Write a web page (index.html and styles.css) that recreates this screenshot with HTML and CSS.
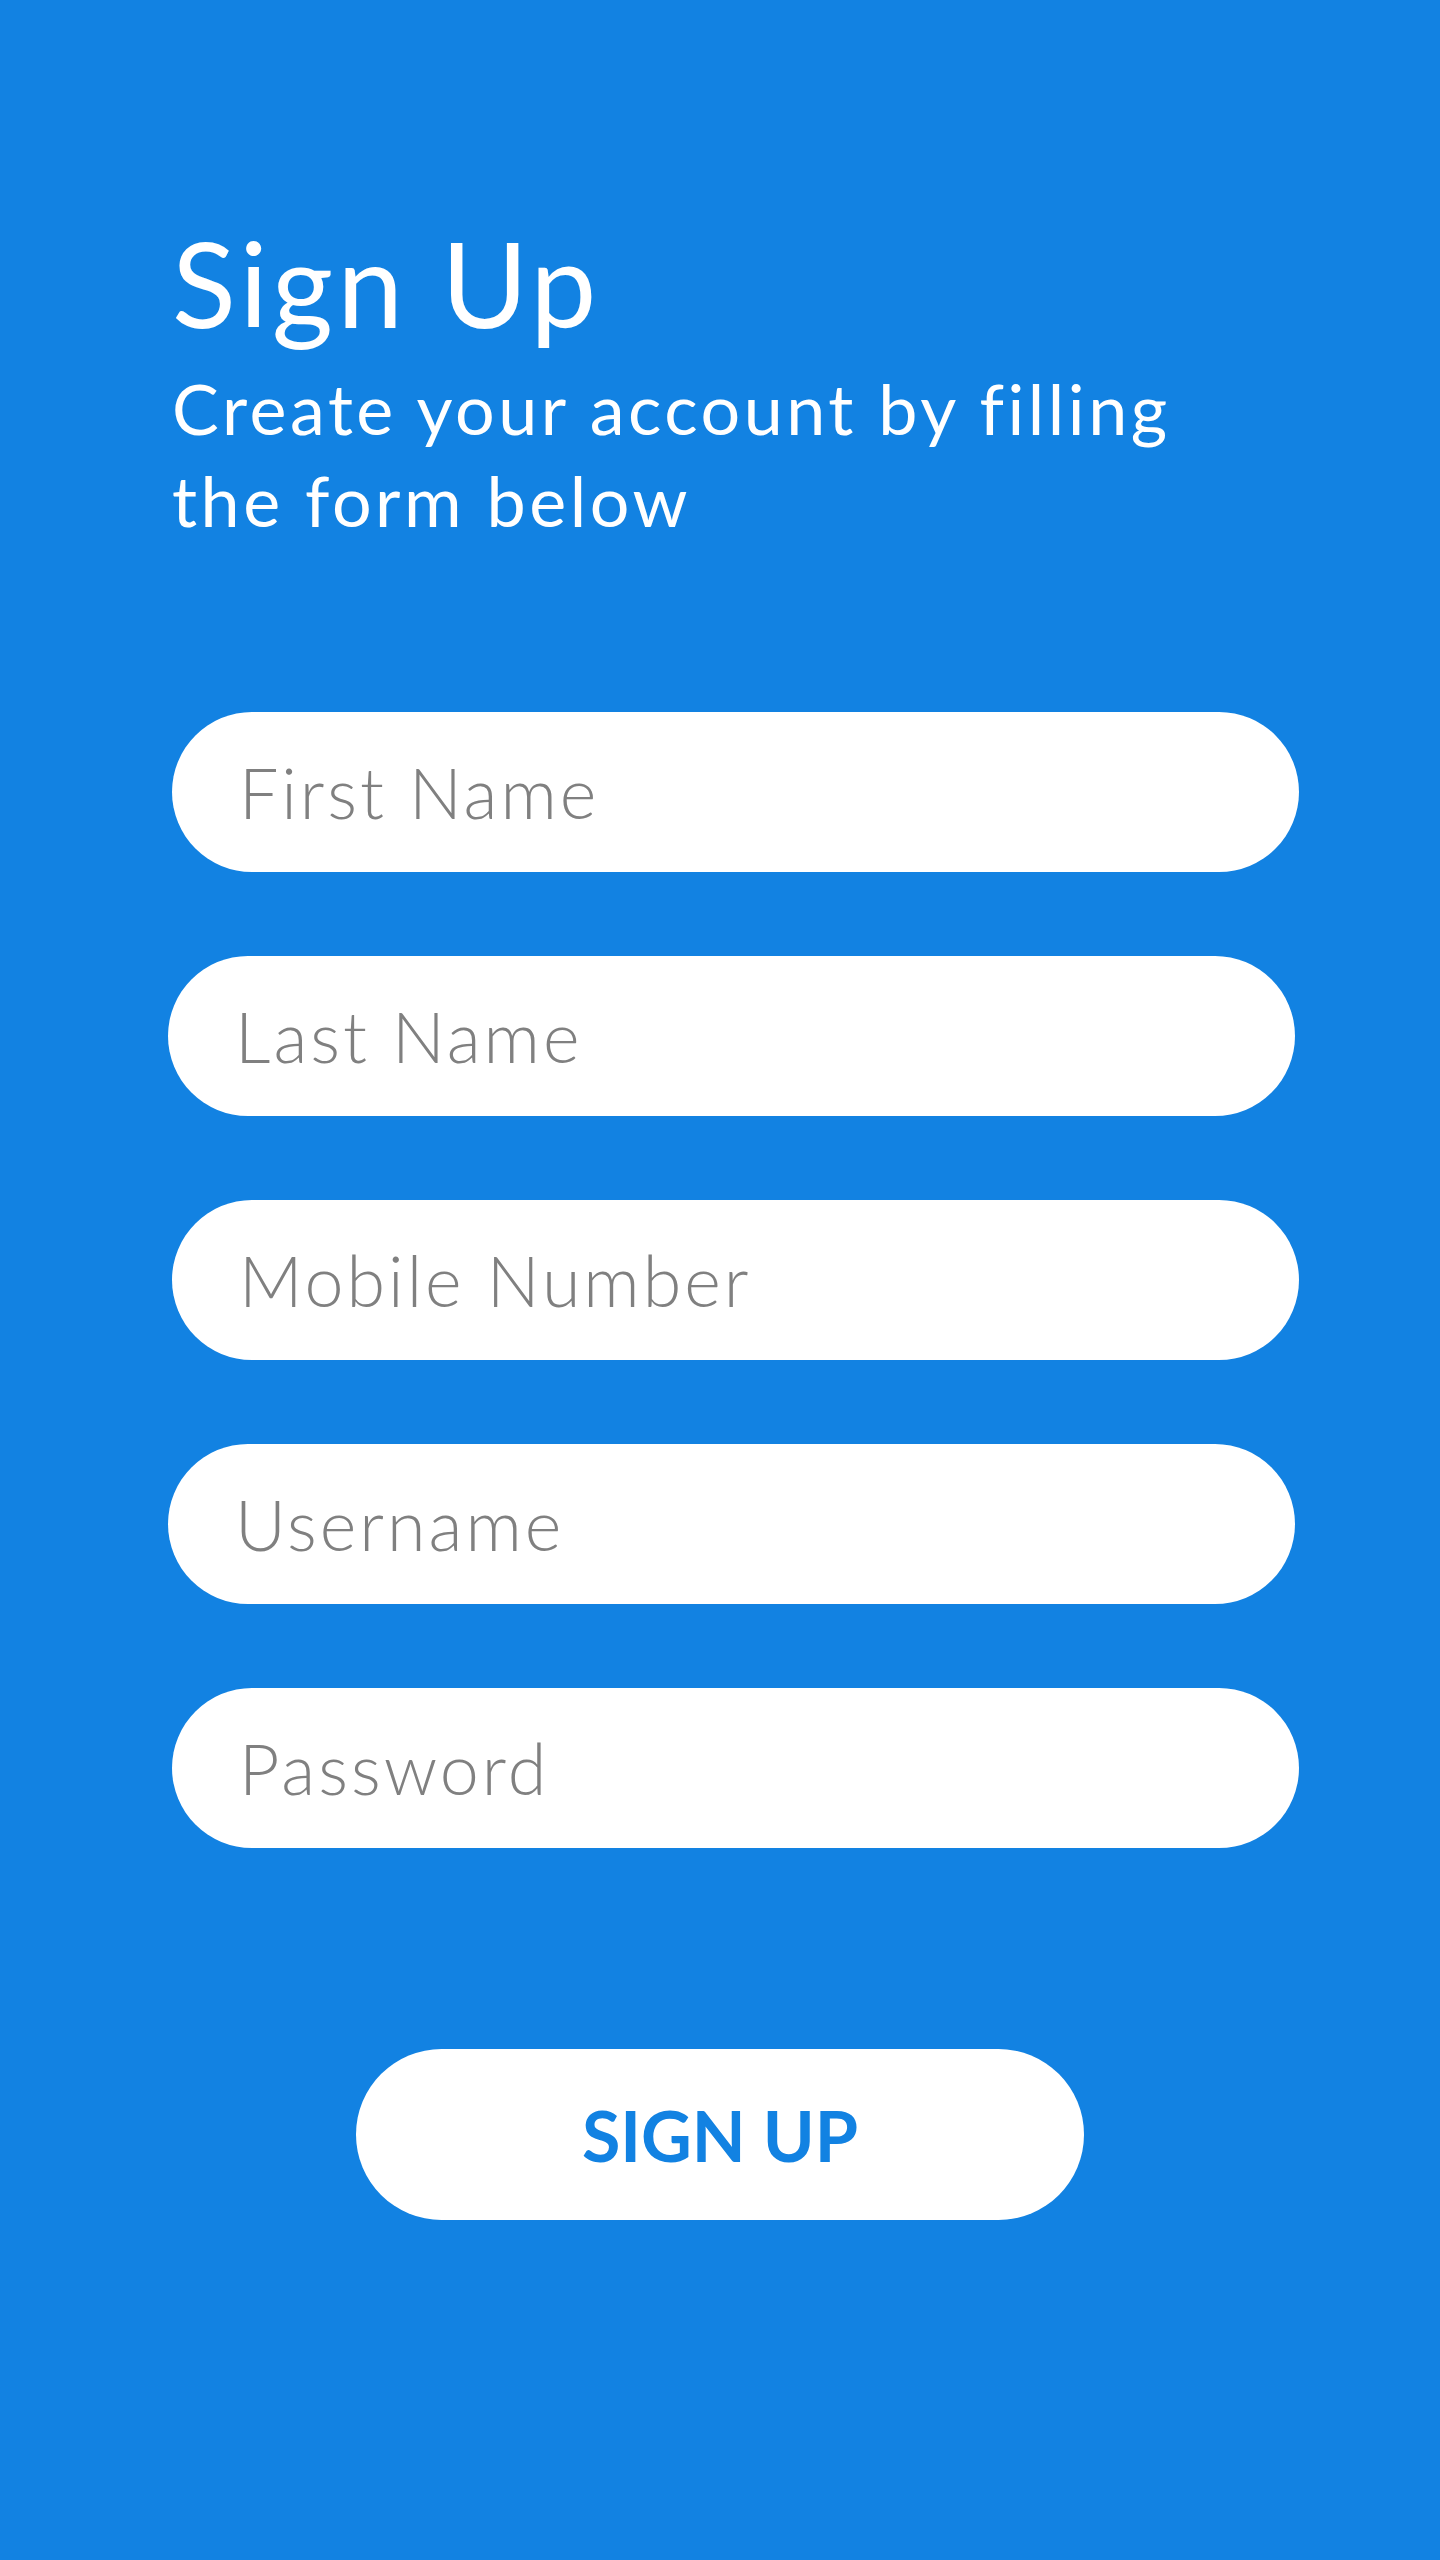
FILE: index.html
```html
<!DOCTYPE html>
<html lang="en">
<head>
<meta charset="utf-8">
<title>Sign Up</title>
<link rel="stylesheet" href="styles.css">
</head>
<body>
<main class="page">
  <header class="intro">
    <h1 class="title">Sign Up</h1>
    <p class="subtitle">Create your account by filling<br>the form below</p>
  </header>
  <form class="form">
    <input class="field" type="text" placeholder="First Name">
    <input class="field field--shift" type="text" placeholder="Last Name">
    <input class="field" type="tel" placeholder="Mobile Number">
    <input class="field field--shift" type="text" placeholder="Username">
    <input class="field" type="password" placeholder="Password">
    <div class="actions">
      <button class="submit" type="button">SIGN UP</button>
    </div>
  </form>
</main>
</body>
</html>
```
FILE: styles.css
```css
html, body {
  margin: 0;
  padding: 0;
  background: #1282e2;
}
body {
  width: 1440px;
  height: 2560px;
  font-family: Lato, "Noto Sans", sans-serif;
}
.page {
  padding: 0 140px 0 172px;
  display: flex;
  flex-direction: column;
}
.intro {
  padding-top: 218px;
  color: #fff;
}
.title {
  margin: 0;
  font-size: 118px;
  font-weight: 400;
  line-height: 130px;
  letter-spacing: 4px;
}
.subtitle {
  margin: 14px 0 0;
  font-size: 70px;
  font-weight: 400;
  line-height: 92px;
  letter-spacing: 3.5px;
}
.form {
  margin-top: 166px;
  display: flex;
  flex-direction: column;
  gap: 84px;
}
.field {
  box-sizing: border-box;
  width: 1127px;
  height: 160px;
  border: none;
  border-radius: 80px;
  background: #fff;
  padding: 0 0 0 67px;
  font-family: Lato, "Noto Sans", sans-serif;
  font-size: 70px;
  font-weight: 300;
  letter-spacing: 3px;
  color: #808080;
  outline: none;
}
.field--shift {
  margin-left: -4px;
}
.field::placeholder {
  color: #808080;
  opacity: 1;
}
.actions {
  margin-top: 117px;
  display: flex;
  justify-content: center;
  width: 1096px;
}
.submit {
  width: 728px;
  height: 171px;
  border: none;
  border-radius: 86px;
  background: #fff;
  color: #1282e2;
  font-family: Lato, "Noto Sans", sans-serif;
  font-size: 70px;
  font-weight: 700;
  letter-spacing: 0;
  padding: 0;
  cursor: pointer;
}
```
